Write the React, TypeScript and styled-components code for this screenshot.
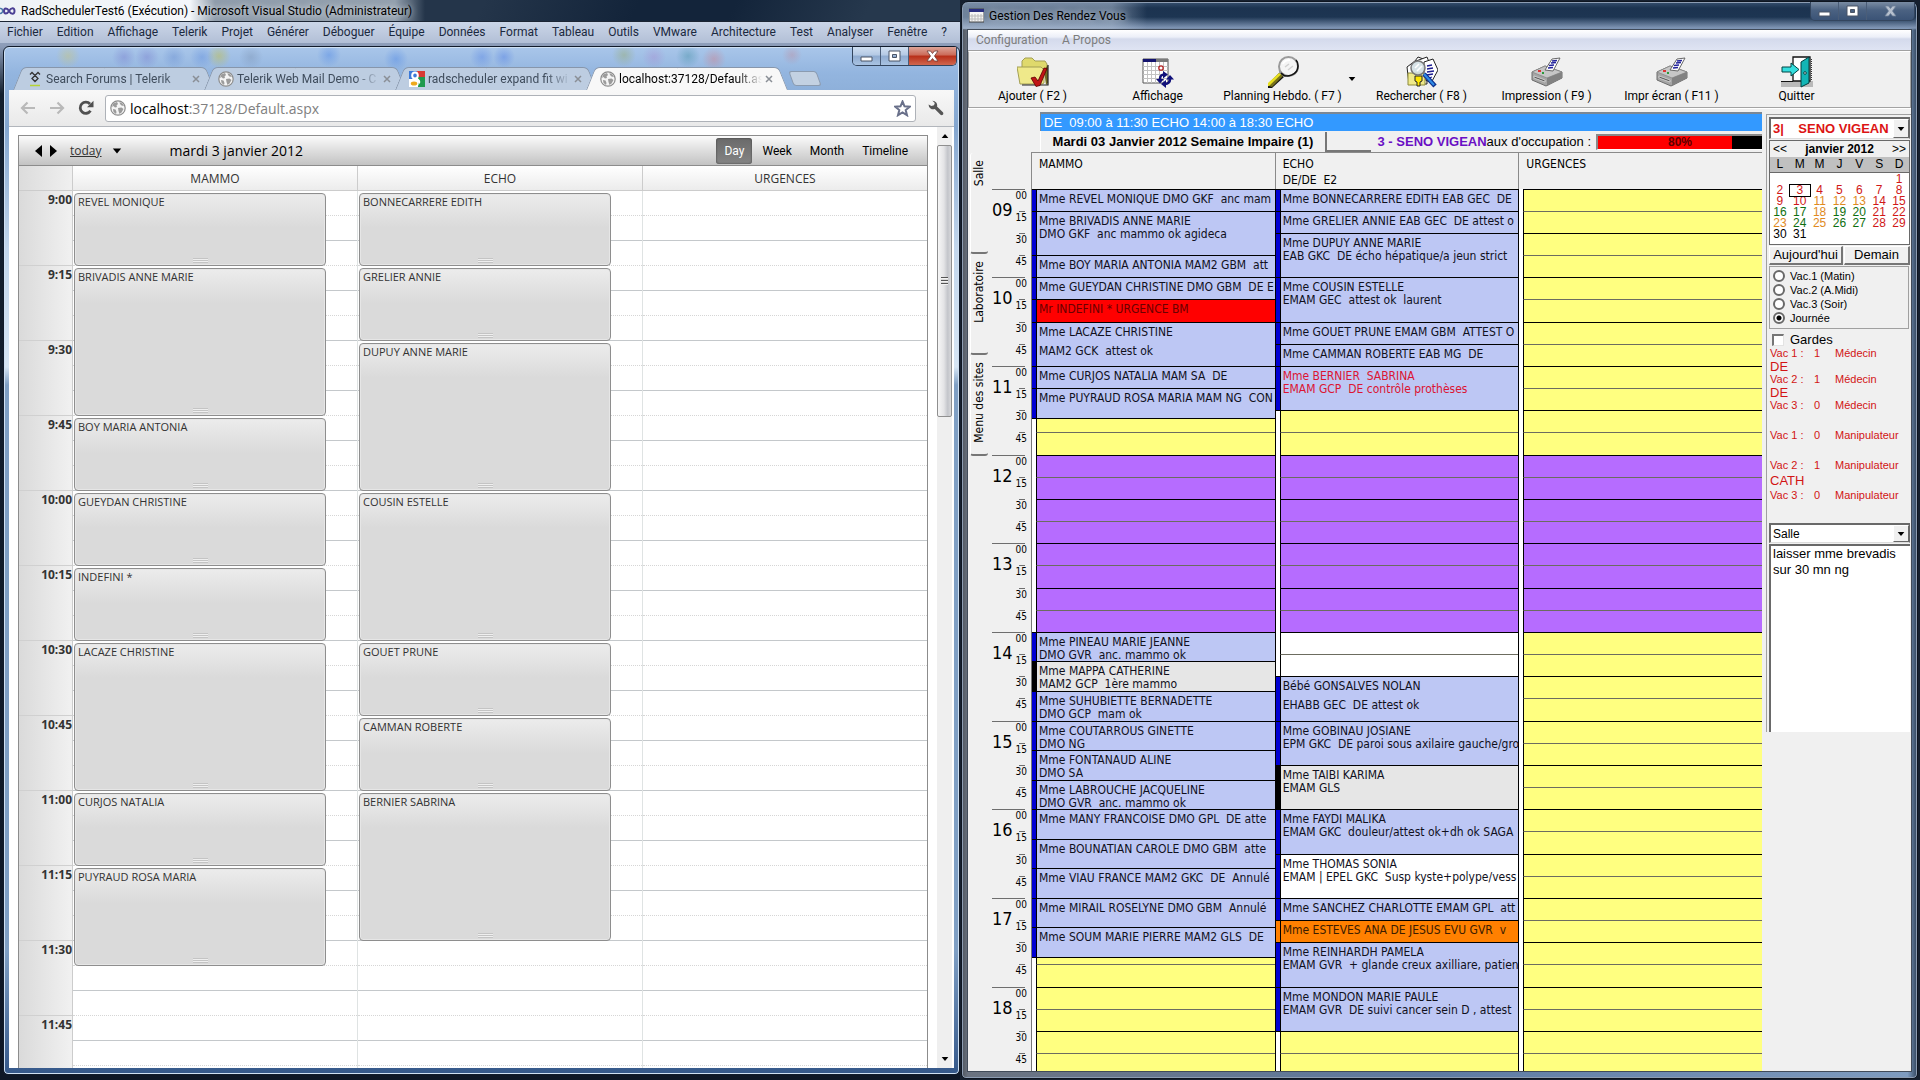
import React from "react";
import styled, { createGlobalStyle, css } from "styled-components";

const ui = `Roboto, "Open Sans", sans-serif`;
const web = `"Open Sans", "Noto Sans", sans-serif`;
const arial = `"Liberation Sans", Arial, sans-serif`;
const tahoma = `"DejaVu Sans Condensed", "DejaVu Sans", sans-serif`;

const GlobalStyle = createGlobalStyle`
  * { box-sizing: border-box; }
  body { margin: 0; font-family: ${ui}; font-size: 12px; color: #000; }
  button, input, select, textarea { font: inherit; color: inherit; margin: 0; }
  button { padding: 0; border: 0; background: none; }
`;

const Desktop = styled.div`
  display: grid;
  grid-template-columns: minmax(0, 1fr) minmax(0, 1fr);
  height: 100vh;
  overflow: hidden;
  background: #16202f;
`;

/* ---------- Visual Studio, behind the browser ---------- */

const Studio = styled.section`
  display: flex;
  flex-direction: column;
  min-height: 0;
  background: linear-gradient(to bottom, #b3bfd6 0, #8c9cb8 46px, #14202f 94px, #0e1726 100%);
`;
const StudioTitle = styled.header`
  display: flex;
  align-items: center;
  gap: 5px;
  height: 22px;
  line-height: 22px;
  border-bottom: 1px solid #1b2534;
  background:
    linear-gradient(to right, #eef2f6 0, #f4f7fa 190px, #8f9cab 215px, #93a0ae 395px, rgba(60, 76, 96, 0) 425px),
    linear-gradient(115deg, #24354a 0, #24354a 50%, #13243a 66%, #13243a 76%, #26384d 90%);
`;
const StudioTitleText = styled.h1`
  margin: 0;
  font-size: 12px;
  font-weight: 400;
  text-shadow: 0 0 6px #fff;
`;
const StudioMenu = styled.nav`
  display: flex;
  gap: 14px;
  height: 21px;
  padding: 0 7px;
  line-height: 21px;
  color: #1b293e;
  background: linear-gradient(to bottom, #cbd6e8, #b2bfd6);
`;
const MenuItem = styled.button`
  flex: none;
`;

/* ---------- Browser window ---------- */

const Browser = styled.section`
  display: flex;
  flex: 1;
  flex-direction: column;
  min-height: 0;
  margin: 3px 0 5px 3px;
  padding: 0 5px 6px 5px;
  border: 1px solid #111b2b;
  border-radius: 6px 6px 5px 5px;
  box-shadow: inset 0 0 0 1px #cfe0f2;
  background:
    radial-gradient(circle at 64px 9px, rgba(200, 196, 120, 0.45), transparent 12px),
    radial-gradient(circle at 120px 10px, rgba(110, 110, 200, 0.35), transparent 12px),
    radial-gradient(circle at 143px 10px, rgba(110, 110, 200, 0.35), transparent 12px),
    radial-gradient(circle at 170px 10px, rgba(80, 120, 200, 0.3), transparent 12px),
    radial-gradient(circle at 198px 10px, rgba(80, 130, 220, 0.35), transparent 12px),
    radial-gradient(circle at 215px 9px, rgba(190, 190, 90, 0.55), transparent 12px),
    radial-gradient(circle at 247px 10px, rgba(110, 130, 160, 0.3), transparent 12px),
    radial-gradient(circle at 325px 8px, rgba(70, 130, 230, 0.4), transparent 12px),
    radial-gradient(circle at 392px 12px, rgba(70, 130, 230, 0.4), transparent 12px),
    radial-gradient(circle at 478px 10px, rgba(70, 120, 230, 0.35), transparent 12px),
    radial-gradient(circle at 500px 10px, rgba(60, 110, 230, 0.35), transparent 11px),
    radial-gradient(circle at 620px 8px, rgba(150, 170, 110, 0.45), transparent 12px),
    radial-gradient(circle at 650px 10px, rgba(170, 120, 200, 0.3), transparent 12px),
    radial-gradient(circle at 684px 9px, rgba(60, 140, 160, 0.4), transparent 12px),
    radial-gradient(circle at 710px 12px, rgba(210, 120, 130, 0.4), transparent 12px),
    radial-gradient(circle at 788px 8px, rgba(200, 120, 130, 0.3), transparent 10px),
    linear-gradient(to bottom, #a9c6ea 0, #93b5df 26px, #84a6cf 80px, #c2d6ec 200px, #d6e5f4 320px, #7f9fc4 338px, #7f9fc4 88%, #35588a 100%);
`;
const BrowserTop = styled.header`
  display: flex;
  justify-content: space-between;
  height: 43px;
`;
const TabList = styled.div`
  display: flex;
  align-items: flex-end;
  padding-left: 4px;
`;
const TabItem = styled.div<{ $active?: boolean }>`
  position: relative;
  z-index: ${(p) => (p.$active ? 1 : 0)};
  display: flex;
  align-items: center;
  gap: 3px;
  width: 201px;
  height: 23px;
  margin-right: -10px;
  padding: 0 14px;
  color: ${(p) => (p.$active ? "#000" : "#3f4c5c")};
  &::before,
  &::after {
    content: "";
    position: absolute;
    z-index: -1;
    top: 0;
    bottom: 0;
    width: 50%;
    border-top: 1px solid #8796ab;
    background: ${(p) => (p.$active ? "#f8f8f8" : "#bdcde1")};
  }
  &::before {
    left: 0;
    border-left: 1px solid #8796ab;
    border-top-left-radius: 5px;
    transform: skewX(-22deg);
    transform-origin: bottom left;
  }
  &::after {
    right: 0;
    border-right: 1px solid #8796ab;
    border-top-right-radius: 5px;
    transform: skewX(22deg);
    transform-origin: bottom right;
  }
`;
const TabLabel = styled.span`
  flex: 1;
  overflow: hidden;
  white-space: nowrap;
  mask-image: linear-gradient(to right, #000 82%, transparent 100%);
`;
const NewTab = styled.button`
  align-self: flex-end;
  width: 28px;
  height: 15px;
  margin: 0 0 4px 14px;
  border: 1px solid #8b9bb0;
  border-radius: 3px;
  background: #c3d1e2;
  transform: skewX(20deg);
`;
const Caption = styled.div`
  display: flex;
  height: 19px;
  margin-right: -3px;
  border: 1px solid #33455e;
  border-top: 0;
  border-radius: 0 0 5px 5px;
  overflow: hidden;
`;
const CaptionButton = styled.button<{ $close?: boolean; $dim?: boolean }>`
  display: flex;
  align-items: center;
  justify-content: center;
  width: ${(p) => (p.$close ? 47 : 28)}px;
  border-right: ${(p) => (p.$close ? "0" : "1px solid #4a5d78")};
  background: ${(p) =>
    p.$dim
      ? "linear-gradient(to bottom, #7a8ca3, #4b6282 45%, #3b5376)"
      : p.$close
      ? "linear-gradient(to bottom, #dda498, #cb6a58 45%, #b82e18 50%, #d0674f)"
      : "linear-gradient(to bottom, #d0dff1, #b4c9e4 45%, #8fabd0 50%, #a9c3e2)"};
`;
const BrowserBar = styled.div`
  display: flex;
  align-items: center;
  gap: 10px;
  height: 37px;
  padding: 0 9px;
  border-bottom: 1px solid #b2b6bc;
  background: linear-gradient(to bottom, #f8f8f8, #e9e9e9);
`;
const BarButton = styled.button`
  display: flex;
  width: 19px;
  justify-content: center;
`;
const Omnibox = styled.div`
  display: flex;
  flex: 1;
  align-items: center;
  gap: 4px;
  height: 27px;
  padding: 0 4px;
  border: 1px solid #aeb2b8;
  border-radius: 3px;
  background: #fff;
`;
const Url = styled.span`
  flex: 1;
  font-family: ${web};
  font-size: 14px;
  color: #808080;
`;
const UrlHost = styled.span`
  color: #000;
`;
const Viewport = styled.div`
  display: flex;
  flex: 1;
  min-height: 0;
  background: #fff;
`;

/* ---------- Telerik scheduler ---------- */

const Scheduler = styled.main`
  display: flex;
  flex: 1;
  flex-direction: column;
  min-width: 0;
  margin: 8px 9px 0 9px;
  border: 1px solid #8c8c8c;
  border-bottom: 0;
  overflow: hidden;
  color: #333;
  font-family: ${web};
`;
const SchedulerBar = styled.header`
  display: flex;
  flex: none;
  align-items: center;
  height: 30px;
  padding: 0 11px 0 13px;
  border-bottom: 1px solid #8c8c8c;
  background: linear-gradient(to bottom, #fbfbfb, #dedede 50%, #c3c3c3);
  color: #000;
`;
const StepButton = styled.button`
  display: flex;
  width: 14px;
  justify-content: center;
`;
const TodayLink = styled.a`
  margin: 0 10px 0 10px;
  color: #333;
`;
const DayTitle = styled.h2`
  margin: 0 auto 0 48px;
  font-size: 14px;
  font-weight: 400;
`;
const ViewTabs = styled.div`
  display: flex;
  gap: 2px;
  font-family: ${ui};
`;
const ViewTab = styled.button<{ $active?: boolean }>`
  height: 26px;
  padding: 0 8px;
  border-radius: 3px;
  ${(p) =>
    p.$active &&
    css`
      color: #fff;
      background: linear-gradient(to bottom, #6a6a6a, #848484);
      box-shadow: inset 0 0 2px #333;
    `}
`;
const SchedulerHeads = styled.div`
  display: flex;
  flex: none;
  height: 25px;
  padding-left: 54px;
  line-height: 25px;
  border-bottom: 1px solid #ccc;
  background: linear-gradient(to right, #dcdcdc, #f0f0f0 54px, transparent 54px), linear-gradient(to bottom, #fff, #ececec);
`;
const SchedulerHead = styled.div`
  flex: 1;
  border-left: 1px solid #ccc;
  text-align: center;
  &:first-child { margin-left: -1px; }
`;
const SchedulerBody = styled.div`
  display: flex;
  flex: 1;
  min-height: 0;
  overflow: hidden;
`;
const TimeColumn = styled.div`
  flex: none;
  width: 54px;
  border-right: 1px solid #ccc;
  background: linear-gradient(to right, #dadada, #f1f1f1);
`;
const TimeLabel = styled.div`
  height: 75px;
  padding-top: 1px;
  border-bottom: 1px solid #d0d0d0;
  font-weight: 700;
  line-height: 16px;
  text-align: right;
`;
const DayColumn = styled.div`
  display: grid;
  flex: 1;
  grid-template-columns: minmax(0, 1fr);
  grid-template-rows: repeat(36, 25px);
  min-width: 0;
  & + & { border-left: 1px solid #dfe3e3; }
`;
const Line = styled.div<{ $row: number }>`
  grid-column: 1;
  grid-row: ${(p) => p.$row};
  border-bottom: 1px ${(p) => (p.$row % 2 ? "dotted #d6d6d6" : "solid #c4c8cb")};
`;
const Appointment = styled.article<{ $start: number; $span: number }>`
  display: flex;
  flex-direction: column;
  justify-content: space-between;
  grid-column: 1;
  grid-row: ${(p) => p.$start + 1} / span ${(p) => p.$span};
  margin: 2px 31px 0 1px;
  padding: 0 3px 2px 3px;
  border: 1px solid #8e8e8e;
  border-radius: 4px;
  background: linear-gradient(to bottom, #ececec 0, #dadada 34px);
  box-shadow: inset 0 0 0 1px #e6e6e6;
  font-size: 11px;
  line-height: 15px;
`;
const Grip = styled.i`
  align-self: center;
  width: 15px;
  height: 5px;
  background: repeating-linear-gradient(to bottom, #c4c4c4 0, #c4c4c4 1px, #efefef 1px, #efefef 2px);
`;
const Scrollbar = styled.div`
  display: flex;
  flex: none;
  flex-direction: column;
  align-items: center;
  width: 15px;
  margin-right: 2px;
  background: #efefef;
`;
const ScrollArrow = styled.button`
  display: flex;
  align-items: center;
  justify-content: center;
  width: 15px;
  height: 18px;
`;
const ScrollTrack = styled.div`
  flex: 1;
  width: 15px;
`;
const ScrollThumb = styled.div`
  display: flex;
  align-items: center;
  justify-content: center;
  height: 30%;
  border: 1px solid #8f8f8f;
  border-radius: 2px;
  background: linear-gradient(to right, #f6f6f6, #e4e4e6 45%, #c3c5ca 75%, #d8d8db);
`;
const ThumbGrip = styled.i`
  width: 7px;
  height: 8px;
  background: repeating-linear-gradient(to bottom, #555 0, #555 1px, #fff 1px, #ccc 3px);
`;

/* ---------- Gestion Des Rendez Vous window ---------- */

const Agenda = styled.section`
  display: flex;
  flex-direction: column;
  min-height: 0;
  margin: 1px 2px 1px 1px;
  padding: 0 5px 6px 5px;
  border: 1px solid #0e1520;
  border-radius: 7px 7px 5px 5px;
  box-shadow: inset 0 0 0 1px #8d9db3;
  background:
    linear-gradient(to right, rgba(180, 195, 215, 0.55) 0, rgba(180, 195, 215, 0.5) 150px, transparent 185px) top / 100% 27px no-repeat,
    linear-gradient(to bottom, #37506f 0, #1c3350 6px, #1d3552 15px, #8096b5 26px, transparent 28px),
    linear-gradient(to right, #50565f 0, #6b7380 6px, #5e7ba2 50%, #7f9cc0 99%, #33475f 100%);
`;
const AgendaTitle = styled.header`
  display: flex;
  align-items: flex-start;
  justify-content: space-between;
  height: 27px;
`;
const AgendaName = styled.h1`
  display: flex;
  align-items: center;
  gap: 5px;
  height: 27px;
  margin: 0;
  padding-left: 2px;
  font-size: 12px;
  font-weight: 400;
  text-shadow: 0 0 6px #cfd9e6;
`;
const Client = styled.div`
  display: flex;
  flex: 1;
  flex-direction: column;
  min-height: 0;
  border: 1px solid #414b59;
  background: #f0f0f0;
`;
const AgendaMenu = styled.nav`
  display: flex;
  flex: none;
  gap: 14px;
  height: 21px;
  padding: 0 8px;
  line-height: 20px;
  color: #7d7d7d;
  background: linear-gradient(to bottom, #fff 0, #eceff8 35%, #d4daec 45%, #dfe4f3);
  border-bottom: 1px solid #a0a0a0;
`;
const ToolRow = styled.div`
  display: flex;
  flex: none;
  height: 57px;
  padding: 4px 1px 0 1px;
  border: 1px solid #a3a3a3;
  border-top-color: #fff;
  box-shadow: 0 1px 0 #fff;
`;
const Tool = styled.button`
  display: flex;
  flex-direction: column;
  align-items: center;
  justify-content: flex-start;
  width: 125px;
  line-height: 16px;
`;
const ToolArrow = styled.button`
  width: 14px;
  padding-bottom: 6px;
`;
const Workspace = styled.div`
  display: flex;
  flex: 1;
  min-height: 0;
`;
const SiteTabs = styled.div`
  display: flex;
  flex: none;
  flex-direction: column;
  width: 20px;
  padding: 45px 0 0 2px;
`;
const SiteTab = styled.button`
  height: 101px;
  padding: 7px 0;
  border-left: 1px solid #fff;
  border-bottom: 2px solid #767676;
  border-radius: 3px;
  font-family: ${tahoma};
  line-height: 17px;
  text-align: right;
  writing-mode: sideways-lr;
`;
const Planner = styled.main`
  display: flex;
  flex: 1;
  flex-direction: column;
  min-width: 0;
  padding-top: 4px;
`;
const DutyLine = styled.div`
  flex: none;
  height: 19px;
  margin-left: 52px;
  padding-left: 3px;
  border-top: 2px solid #7b8794;
  border-left: 1px solid #7b8794;
  background: #3399ff;
  color: #fff;
  font-family: ${arial};
  font-size: 13px;
  line-height: 17px;
  white-space: pre;
`;
const InfoLine = styled.div`
  display: flex;
  flex: none;
  align-items: center;
  height: 21px;
  margin-left: 52px;
  border-left: 1px solid #fff;
  font-family: ${arial};
  font-size: 13px;
`;
const DateLabel = styled.strong`
  width: 284px;
  text-align: center;
  white-space: nowrap;
`;
const InfoBox = styled.div`
  width: 46px;
  height: 20px;
  border-left: 2px solid #767676;
  border-bottom: 2px solid #767676;
`;
const SectorLabel = styled.strong`
  margin-left: auto;
  color: #6a0fc4;
  white-space: nowrap;
`;
const RateLabel = styled.span`
  margin-right: 5px;
  white-space: nowrap;
`;
const Gauge = styled.div`
  display: grid;
  width: 166px;
  height: 16px;
  border: 2px solid #8a8a8a;
  border-right: 0;
  border-bottom: 1px solid #fff;
  background: #000;
`;
const GaugeFill = styled.div`
  grid-area: 1 / 1;
  background: #f00;
`;
const GaugeText = styled.span`
  grid-area: 1 / 1;
  color: #5a0000;
  font-weight: 700;
  font-size: 12px;
  line-height: 13px;
  text-align: center;
`;
const PlannerHeads = styled.div`
  display: flex;
  flex: none;
  height: 37px;
  padding-left: 43px;
`;
const PlannerHead = styled.div`
  flex: 1;
  padding: 3px 7px 0 7px;
  border-top: 1px solid #8a8a8a;
  border-left: 1px solid #8a8a8a;
  font-family: ${tahoma};
  line-height: 16px;
  white-space: pre;
`;

/* One row per five minutes; three hours take 266px. */
const STEPS = 120;
const edge = (k: number) => Math.floor((k * 5 * 266) / 180);
const rowTemplate = Array.from({ length: STEPS }, (_, k) => `${edge(k + 1) - edge(k)}px`).join(" ");

const PlannerBody = styled.div`
  display: flex;
  flex: 1;
  min-height: 0;
  overflow: hidden;
`;
const Ruler = styled.div`
  display: grid;
  flex: none;
  grid-template-columns: 21px 14px;
  grid-template-rows: ${rowTemplate};
  width: 43px;
  padding-left: 4px;
  font-family: ${tahoma};
`;
const HourMark = styled.div<{ $hour: number }>`
  grid-column: 1;
  grid-row: ${(p) => p.$hour * 12 + 1} / span 12;
  padding-top: 7px;
  border-top: 1px solid #6e6e6e;
  font-size: 18px;
  line-height: 26px;
`;
const QuarterMark = styled.div<{ $quarter: number }>`
  display: flex;
  flex-direction: column;
  align-items: flex-end;
  grid-column: 2;
  grid-row: ${(p) => p.$quarter * 3 + 1} / span 3;
  font-size: 10px;
  line-height: 11px;
  &::before {
    content: "";
    width: ${(p) => (p.$quarter % 4 ? 6 : 12)}px;
    height: 1px;
    margin-right: 2px;
    background: #6e6e6e;
  }
`;
const Room = styled.div`
  display: grid;
  flex: 1;
  grid-template-columns: 4px minmax(0, 1fr);
  grid-template-rows: ${rowTemplate};
  min-width: 0;
  border-left: 1px solid #000;
  background: #fff;
  &:nth-child(2) { border-left-color: #777; }
`;
const Slot = styled.div<{ $quarter: number; $fill: string }>`
  grid-column: 2;
  grid-row: ${(p) => p.$quarter * 3 + 1} / span 3;
  border-left: 1px solid #000;
  border-top: 1px solid ${(p) => (p.$quarter % 2 ? "#6c6c60" : "#000")};
  background: ${(p) => p.$fill};
`;
const Visit = styled.article<{ $from: number; $to: number; $fill: string; $bar: string; $ink: string; $spaced: boolean }>`
  display: flex;
  flex-direction: column;
  gap: ${(p) => (p.$spaced ? 6 : 0)}px;
  grid-column: 1 / 3;
  grid-row: ${(p) => p.$from / 5 + 1} / ${(p) => p.$to / 5 + 1};
  padding: 3px 0 0 7px;
  border-top: 1px solid #000;
  box-shadow: 0 1px 0 #000;
  background: linear-gradient(to right, ${(p) => p.$bar} 4px, #000 4px, #000 5px, ${(p) => p.$fill} 5px);
  color: ${(p) => p.$ink};
  font-family: ${tahoma};
  line-height: 13px;
  white-space: pre;
  overflow: hidden;
`;

/* ---------- Side panel ---------- */

const Side = styled.aside`
  flex: none;
  align-self: flex-start;
  width: 145px;
  margin: 6px 0 0 4px;
  padding: 2px 1px 0 2px;
  border-top: 1px solid #a0a0a0;
  border-left: 1px solid #a0a0a0;
  font-family: ${arial};
`;
const SelectBox = styled.div<{ $large?: boolean }>`
  display: grid;
  height: ${(p) => (p.$large ? 22 : 20)}px;
  border: 2px solid #696969;
  border-right: 1px solid #696969;
  border-bottom: 1px solid #dcdcdc;
  background: #fff;
`;
const Select = styled.select<{ $large?: boolean }>`
  grid-area: 1 / 1;
  min-width: 0;
  padding: 0 0 0 2px;
  border: 0;
  appearance: none;
  background: #fff;
  ${(p) =>
    p.$large &&
    css`
      color: #dc1414;
      font-size: 13px;
      font-weight: 700;
    `}
`;
const SelectArrow = styled.span`
  display: flex;
  align-items: center;
  justify-content: center;
  grid-area: 1 / 1;
  justify-self: end;
  width: 16px;
  border: 1px solid #fff;
  border-right-color: #696969;
  border-bottom-color: #696969;
  background: #f0f0f0;
  pointer-events: none;
`;
const Calendar = styled.section`
  margin-top: 1px;
  border: 1px solid #696969;
  background: #fff;
`;
const CalendarHead = styled.header`
  display: flex;
  align-items: center;
  justify-content: space-between;
  height: 16px;
  padding: 0 3px;
  background: #f0f0f0;
`;
const MonthTable = styled.table`
  width: 100%;
  border-collapse: collapse;
  table-layout: fixed;
  text-align: center;
  line-height: 11px;
  th {
    height: 15px;
    padding: 0;
    background: #c0c0c0;
    border-bottom: 1px solid #696969;
    font-size: 12px;
    font-weight: 400;
  }
  td { height: 11px; padding: 0; }
  tbody::before {
    content: "";
    display: table-row;
    height: 2px;
  }
`;
const MonthFoot = styled.div`
  height: 4px;
`;
const DayCell = styled.td<{ $ink: string; $current: boolean }>`
  color: ${(p) => p.$ink};
  outline: ${(p) => (p.$current ? "1px solid #000" : "none")};
`;
const DayButtons = styled.div`
  display: grid;
  grid-template-columns: 74px 1fr;
  gap: 1px;
  margin-top: 1px;
`;
const PushButton = styled.button`
  height: 19px;
  border: 1px solid #fff;
  border-right: 2px solid #767676;
  border-bottom: 2px solid #767676;
  background: #f0f0f0;
  font-size: 13px;
  line-height: 16px;
`;
const Periods = styled.fieldset`
  margin: 1px 1px 0 0;
  padding: 2px 2px 3px 3px;
  border: 1px solid #a0a0a0;
  font-size: 11px;
`;
const Choice = styled.label`
  display: flex;
  align-items: center;
  gap: 5px;
  height: 14px;
`;
const Radio = styled.input`
  flex: none;
  width: 12px;
  height: 12px;
  appearance: none;
  border: 2px solid #696969;
  border-radius: 50%;
  background: #fff;
  &:checked { background: radial-gradient(circle, #000 2px, #fff 3px); }
`;
const Check = styled.input`
  width: 12px;
  height: 12px;
  appearance: none;
  border: 2px solid #767676;
  border-right: 1px solid #e3e3e3;
  border-bottom: 1px solid #e3e3e3;
  background: #fff;
`;
const Guards = styled.label`
  display: flex;
  align-items: center;
  gap: 6px;
  height: 18px;
  padding: 3px 0 0 3px;
  font-size: 13px;
`;
const StaffList = styled.ul<{ $step: number }>`
  display: grid;
  grid-auto-rows: ${(p) => p.$step}px;
  margin: 0;
  padding: 0;
  list-style: none;
  color: #d21414;
`;
const StaffItem = styled.li`
  display: grid;
  grid-template-columns: 44px 21px 1fr;
  grid-template-rows: 13px 1fr;
  align-items: center;
  padding-left: 1px;
  font-size: 11px;
  line-height: 13px;
`;
const StaffName = styled.span`
  grid-column: 1 / 4;
  font-size: 13px;
`;
const StaffGap = styled.div`
  height: 4px;
`;
const Note = styled.textarea`
  display: block;
  width: 100%;
  height: 188px;
  margin-top: 1px;
  padding: 0 2px;
  border: 0;
  border-top: 2px solid #696969;
  border-left: 2px solid #696969;
  border-radius: 0;
  resize: none;
  background: #fff;
  font-size: 13px;
  line-height: 16px;
`;

/* ---------- Icons ---------- */

const Triangle = ({ dir, size = 8 }: { dir: "left" | "right" | "up" | "down"; size?: number }) => {
  const d = { left: "M9 0v12L2 6z", right: "M3 0v12l7-6z", up: "M1 9h10L6 3z", down: "M1 3h10L6 9z" }[dir];
  return (
    <svg width={size} height={size} viewBox="0 0 12 12" aria-hidden="true">
      <path d={d} fill="#000" />
    </svg>
  );
};
const GlobeIcon = () => (
  <svg width="16" height="16" viewBox="0 0 16 16" aria-hidden="true">
    <circle cx="8" cy="8" r="7.2" fill="#f4f4f4" stroke="#8c8c8c" strokeWidth="1.2" />
    <path d="M3 3.5 7 2l1 2-1.500 1.500L7 7 5 7.500 3.500 6 2 7zM9.500 2l3 1.500L14 6l-2.500-.5L10 4zM8 8l3.500-.5L13.500 9l-2 3.500L9.500 14l-1-3zM3 9l2.500.5L6.500 12 6 14l-2.500-2z" fill="#9b9b9b" />
  </svg>
);
const TelerikIcon = () => (
  <svg width="16" height="16" viewBox="0 0 16 16" fill="none" aria-hidden="true">
    <path d="M3 3.500 5 1.500l6 6-3 3-3-3 6-6 2 2" stroke="#333" strokeWidth="1.300" />
    <path d="M3 14.500h10" stroke="#b6d334" strokeWidth="1.500" />
  </svg>
);
const GoogleIcon = () => (
  <svg width="16" height="16" viewBox="0 0 16 16" aria-hidden="true">
    <path d="M0 0h16v16H0z" fill="#fff" />
    <path d="M8 0h8v6H9z" fill="#d93a35" />
    <path d="M9 6h7v10H9z" fill="#1f9a4e" />
    <path d="M0 0h8v8H0z" fill="#3b79d8" />
    <ellipse cx="6" cy="4.500" rx="2.800" ry="3" fill="#3b79d8" stroke="#fff" strokeWidth="2" />
    <path d="M6.500 8c4 1 4 3 3 4" fill="none" stroke="#fff" strokeWidth="2.500" />
    <ellipse cx="5" cy="12.500" rx="4" ry="2.800" fill="#eda91f" stroke="#fff" strokeWidth="1.500" />
  </svg>
);
const CloseTabIcon = () => (
  <svg width="8" height="8" viewBox="0 0 8 8" aria-hidden="true">
    <path d="m1 1 6 6m0-6L1 7" stroke="#8a8f96" strokeWidth="1.500" />
  </svg>
);
const MinIcon = () => (
  <svg width="13" height="12" viewBox="0 0 13 12" aria-hidden="true">
    <path d="M1 7h11v4H1z" fill="#fff" stroke="#4b5566" />
  </svg>
);
const MaxIcon = () => (
  <svg width="13" height="12" viewBox="0 0 13 12" aria-hidden="true">
    <path d="M1 1h11v10H1zM4.500 4.500v3h4v-3z" fill="#fff" fillRule="evenodd" stroke="#4b5566" />
  </svg>
);
const CrossIcon = ({ dim }: { dim?: boolean }) => (
  <svg width="13" height="12" viewBox="0 0 13 12" aria-hidden="true">
    <path d="M1 1h3.500l2 2.500L8.500 1H12L8.500 6l3.500 5H8.500l-2-2.500-2 2.500H1l3.500-5z" fill={dim ? "#b6c0ce" : "#fff"} stroke={dim ? "#6f8099" : "#6b3c38"} strokeWidth=".8" />
  </svg>
);
const ArrowIcon = ({ flip }: { flip?: boolean }) => (
  <svg width="16" height="14" viewBox="0 0 16 14" fill="none" aria-hidden="true">
    <path d={flip ? "M1 7h13M8.500 1.500 14 7l-5.500 5.500" : "M15 7H2m5.500-5.500L2 7l5.500 5.500"} stroke="#b9b9b9" strokeWidth="2.200" />
  </svg>
);
const ReloadIcon = () => (
  <svg width="16" height="16" viewBox="0 0 16 16" aria-hidden="true">
    <path d="M12.500 10.800A5.600 5.600 0 1 1 12 4" fill="none" stroke="#505050" strokeWidth="2.800" />
    <path d="M15.500.8v6.400H9z" fill="#505050" />
  </svg>
);
const StarIcon = () => (
  <svg width="17" height="17" viewBox="0 0 17 17" aria-hidden="true">
    <path d="m8.500 1.500 2 4.800 5.200.4-4 3.400 1.300 5.100-4.500-2.800-4.500 2.800 1.300-5.100-4-3.400 5.200-.4z" fill="#fff" stroke="#69708a" strokeWidth="2" />
  </svg>
);
const WrenchIcon = () => (
  <svg width="16" height="16" viewBox="0 0 16 16" aria-hidden="true">
    <path d="M.6 4.600A4.600 4.600 0 0 0 6.800 9l5.700 5.800c1.800 1.200 3.700-.9 2.400-2.500L9 6.600A4.600 4.600 0 0 0 4.400.8L6.800 3 6 5.300l-2.600.6z" fill="#555" />
  </svg>
);
const StudioIcon = () => (
  <svg width="16" height="10" viewBox="0 0 16 10" fill="none" aria-hidden="true">
    <path d="M0 2.500c3-1 4 5 0 5" stroke="#4a78a8" strokeWidth="1.500" />
    <path d="M9 5C7 1.500 4 2 4 5s3 3.500 5 0 5.500-4 5.500 0S11 8.500 9 5z" stroke="#4b3f94" strokeWidth="2" />
  </svg>
);
const AgendaIcon = () => (
  <svg width="15" height="15" viewBox="0 0 15 15" aria-hidden="true">
    <path d="M0 1h15v13H0z" fill="#f5f5f5" stroke="#444" />
    <path d="M0 1h15v3H0z" fill="#2a2f80" />
    <path d="M3 6v7M6 6v7M9 6v7M12 6v7M1 8h13M1 11h13" stroke="#bbb" />
  </svg>
);
const FolderIcon = () => (
  <svg width="32" height="32" viewBox="0 0 32 32" aria-hidden="true">
    <path d="M5 12V5l3-3h7l3 3h10l2 3v5z" fill="#dfd96c" stroke="#a39f52" />
    <path d="M0 11h24l3 3v13l-2 1H3z" fill="#efe98a" stroke="#a39f52" />
    <path d="M27 14l4-5v18l-2 2z" fill="#6f6c22" />
    <path d="M5 29h26V9" fill="none" stroke="#222" strokeWidth="1.200" />
    <path d="m14 22 4-1 3 4 6-13 3 .5-7 17-4 1z" fill="#c01515" stroke="#5a0000" strokeWidth=".8" />
  </svg>
);
const SheetIcon = () => (
  <svg width="32" height="32" viewBox="0 0 32 32" aria-hidden="true">
    <path d="M1 3h25v24H1z" fill="#fff" stroke="#555" />
    <path d="M1 3h25v3H1z" fill="#7a7a7a" />
    <path d="M1 3h13v3H1z" fill="#14146e" />
    <path d="M5.500 6v21M9.500 6v21M13.500 6v21M17.500 6v21M21.500 6v21M1 10.500h25M1 14.500h25M1 18.500h25M1 22.500h25" stroke="#c2c2c2" />
    <circle cx="19" cy="12" r="2.200" fill="#fff" stroke="#b32222" strokeWidth="1.300" />
    <path d="M18 23c0-3 2-4.500 4-4.500M28 23c0 3-2 5-5 5" fill="none" stroke="#10107a" strokeWidth="2.600" />
    <path d="m21 15 5 3.500-5 4zM24 32l-5-4 5-4zM24 23.500h8L28 19zM14 23h8l-4 4.500z" fill="#10107a" />
  </svg>
);
const LensIcon = () => (
  <svg width="32" height="32" viewBox="0 0 32 32" aria-hidden="true">
    <path d="m1 28 11-11 5 4L5 32H1z" fill="#111" />
    <path d="m1 27 11-10 3 2L4 30H1z" fill="#e8e020" />
    <path d="m2 30 12-11.500 2 1.500L5 31z" fill="#77721a" />
    <path d="m12 16 3-3 6 5-3 3z" fill="#333" />
    <circle cx="21.500" cy="10.500" r="9.500" fill="#f4f4f4" stroke="#9a9a9a" strokeWidth="2" />
    <path d="M14 17c5 6 17 2 17-7 0-3-1-5-2-6" fill="none" stroke="#111" strokeWidth="1.600" />
    <path d="M16 8c1-3 4-4 7-4" fill="none" stroke="#fff" strokeWidth="2" />
    <path d="m18 11 4-3m-1 6 5-4" stroke="#d0d0d0" strokeWidth="1.500" />
  </svg>
);
const ResearchIcon = () => (
  <svg width="32" height="32" viewBox="0 0 32 32" aria-hidden="true">
    <path d="M1 11 9 5l3-4 8 3 1 24H3z" fill="#fff" stroke="#222" />
    <path d="M10 5 21 1l2 5" fill="#fff" stroke="#222" />
    <path d="m18 6 9-3 5 11-7 13-7-4z" fill="#fff" stroke="#222" />
    <path d="m21 10 5-1m-5 4 6-1m-6 4 7-1m-7 4 6-1m-4 4 3-1" stroke="#1c1c90" strokeWidth="1.300" />
    <path d="M2 17h15l2 3v9H2z" fill="#efe98a" stroke="#8c8a3a" />
    <path d="M9 20h7v5l-2 1v4h-3v-4l-2-1z" fill="#ffe600" stroke="#222" />
    <circle cx="12" cy="12" r="7" fill="#cfdde2" fillOpacity=".85" stroke="#777" strokeWidth="1.500" />
    <path d="m9 12 4-4m-2 7 5-5" stroke="#fff" strokeWidth="1.500" />
    <path d="m18 18 11 12" stroke="#0c2f8c" strokeWidth="4.500" />
    <path d="m18 18 10 11" stroke="#2f8ae6" strokeWidth="2.200" />
  </svg>
);
const PrinterIcon = () => (
  <svg width="32" height="32" viewBox="0 0 32 32" aria-hidden="true">
    <path d="m1 16 13-6 17 6v6L15 30 1 24z" fill="#a5a5a5" stroke="#6c6c6c" />
    <path d="m1 16 13-6 17 6-15 6z" fill="#c6c6c6" stroke="#888" strokeWidth=".8" />
    <path d="M16 22v8l15-8v-6z" fill="#828282" />
    <path d="m3 20 11 4v2L3 22z" fill="#555" stroke="#ddd" strokeWidth=".8" />
    <path d="m14 14 7-11 8-1-7 13z" fill="#fff" stroke="#666" />
    <path d="m21 5 5-.5m-6 2.500 5-.5m-7 3 5-.5m-6 3 5-.5" stroke="#22229a" strokeWidth="1.300" />
    <path d="M7 15h3" stroke="#d33" strokeWidth="2" />
    <path d="M11 17h2" stroke="#2b9a3a" strokeWidth="2" />
  </svg>
);
const ExitIcon = () => (
  <svg width="32" height="32" viewBox="0 0 32 32" aria-hidden="true">
    <path d="M0 25h32v6H0z" fill="#b9b9b9" />
    <path d="M0 25.500h12" stroke="#111" />
    <path d="M12 1h17v24H12z" fill="#fff" stroke="#111" strokeWidth="1.300" />
    <path d="M30.500 3v22" stroke="#333" strokeDasharray="1 1" />
    <path d="m20 6 8-5v26l-8 4z" fill="#12b5b5" stroke="#023f3f" />
    <circle cx="24" cy="17" r="1.300" fill="#fff" stroke="#023f3f" />
    <path d="M1 11h9V7l8 6.500-8 6.500v-4H1z" fill="#35dede" stroke="#044" />
  </svg>
);

/* ---------- Data ---------- */

const studioMenu = ["Fichier", "Edition", "Affichage", "Telerik", "Projet", "Générer", "Déboguer", "Équipe", "Données", "Format", "Tableau", "Outils", "VMware", "Architecture", "Test", "Analyser", "Fenêtre", "?"];

const browserTabs = [
  { icon: <TelerikIcon />, label: "Search Forums | Telerik" },
  { icon: <GlobeIcon />, label: "Telerik Web Mail Demo - C" },
  { icon: <GoogleIcon />, label: "radscheduler expand fit wi" },
  { icon: <GlobeIcon />, label: "localhost:37128/Default.as", active: true },
];

const hoursLeft = ["9:00", "9:15", "9:30", "9:45", "10:00", "10:15", "10:30", "10:45", "11:00", "11:15", "11:30", "11:45"];

const dayColumns: { name: string; items: [number, number, string][] }[] = [
  {
    name: "MAMMO",
    items: [
      [0, 3, "REVEL MONIQUE"],
      [3, 6, "BRIVADIS ANNE MARIE"],
      [9, 3, "BOY MARIA ANTONIA"],
      [12, 3, "GUEYDAN CHRISTINE"],
      [15, 3, "INDEFINI *"],
      [18, 6, "LACAZE CHRISTINE"],
      [24, 3, "CURJOS NATALIA"],
      [27, 4, "PUYRAUD ROSA MARIA"],
    ],
  },
  {
    name: "ECHO",
    items: [
      [0, 3, "BONNECARRERE EDITH"],
      [3, 3, "GRELIER ANNIE"],
      [6, 6, "DUPUY ANNE MARIE"],
      [12, 6, "COUSIN ESTELLE"],
      [18, 3, "GOUET PRUNE"],
      [21, 3, "CAMMAN ROBERTE"],
      [24, 6, "BERNIER SABRINA"],
    ],
  },
  { name: "URGENCES", items: [] },
];

type VisitKind = "booked" | "urgent" | "waiting" | "open" | "absent" | "flagged";
const looks: Record<VisitKind, { fill: string; bar: string; ink: string }> = {
  booked: { fill: "#bdc7f4", bar: "#0000d2", ink: "#10101c" },
  urgent: { fill: "#ff0000", bar: "#0000d2", ink: "#6a0000" },
  waiting: { fill: "#e6e6e6", bar: "#000000", ink: "#10101c" },
  open: { fill: "#ffffff", bar: "#0000d2", ink: "#10101c" },
  absent: { fill: "#ff8000", bar: "#ff8000", ink: "#3c1c00" },
  flagged: { fill: "#bdc7f4", bar: "#0000d2", ink: "#dc1432" },
};
type VisitData = { from: number; to: number; lines: string[]; kind?: VisitKind; spaced?: boolean };

const rooms: { name: string; open: number[]; visits: VisitData[] }[] = [
  {
    name: "MAMMO",
    open: [],
    visits: [
      { from: 0, to: 15, lines: ["Mme REVEL MONIQUE DMO GKF  anc mam"] },
      { from: 15, to: 45, lines: ["Mme BRIVADIS ANNE MARIE", "DMO GKF  anc mammo ok agideca"] },
      { from: 45, to: 60, lines: ["Mme BOY MARIA ANTONIA MAM2 GBM  att"] },
      { from: 60, to: 75, lines: ["Mme GUEYDAN CHRISTINE DMO GBM  DE E"] },
      { from: 75, to: 90, lines: ["Mr INDEFINI * URGENCE BM"], kind: "urgent" },
      { from: 90, to: 120, lines: ["Mme LACAZE CHRISTINE", "MAM2 GCK  attest ok"], spaced: true },
      { from: 120, to: 135, lines: ["Mme CURJOS NATALIA MAM SA  DE"] },
      { from: 135, to: 155, lines: ["Mme PUYRAUD ROSA MARIA MAM NG  CON"] },
      { from: 300, to: 320, lines: ["Mme PINEAU MARIE JEANNE", "DMO GVR  anc. mammo ok"] },
      { from: 320, to: 340, lines: ["Mme MAPPA CATHERINE", "MAM2 GCP  1ère mammo"], kind: "waiting" },
      { from: 340, to: 360, lines: ["Mme SUHUBIETTE BERNADETTE", "DMO GCP  mam ok"] },
      { from: 360, to: 380, lines: ["Mme COUTARROUS GINETTE", "DMO NG"] },
      { from: 380, to: 400, lines: ["Mme FONTANAUD ALINE", "DMO SA"] },
      { from: 400, to: 420, lines: ["Mme LABROUCHE JACQUELINE", "DMO GVR  anc. mammo ok"] },
      { from: 420, to: 440, lines: ["Mme MANY FRANCOISE DMO GPL  DE atte"] },
      { from: 440, to: 460, lines: ["Mme BOUNATIAN CAROLE DMO GBM  atte"] },
      { from: 460, to: 480, lines: ["Mme VIAU FRANCE MAM2 GKC  DE  Annulé"] },
      { from: 480, to: 500, lines: ["Mme MIRAIL ROSELYNE DMO GBM  Annulé"] },
      { from: 500, to: 520, lines: ["Mme SOUM MARIE PIERRE MAM2 GLS  DE"] },
    ],
  },
  {
    name: "ECHO\nDE/DE  E2",
    open: [20, 21],
    visits: [
      { from: 0, to: 15, lines: ["Mme BONNECARRERE EDITH EAB GEC  DE"] },
      { from: 15, to: 30, lines: ["Mme GRELIER ANNIE EAB GEC  DE attest o"] },
      { from: 30, to: 60, lines: ["Mme DUPUY ANNE MARIE", "EAB GKC  DE écho hépatique/a jeun strict"] },
      { from: 60, to: 90, lines: ["Mme COUSIN ESTELLE", "EMAM GEC  attest ok  laurent"] },
      { from: 90, to: 105, lines: ["Mme GOUET PRUNE EMAM GBM  ATTEST O"] },
      { from: 105, to: 120, lines: ["Mme CAMMAN ROBERTE EAB MG  DE"] },
      { from: 120, to: 150, lines: ["Mme BERNIER  SABRINA", "EMAM GCP  DE contrôle prothèses"], kind: "flagged" },
      { from: 330, to: 360, lines: ["Bébé GONSALVES NOLAN", "EHABB GEC  DE attest ok"], spaced: true },
      { from: 360, to: 390, lines: ["Mme GOBINAU JOSIANE", "EPM GKC  DE paroi sous axilaire gauche/gro"] },
      { from: 390, to: 420, lines: ["Mme TAIBI KARIMA", "EMAM GLS"], kind: "waiting" },
      { from: 420, to: 450, lines: ["Mme FAYDI MALIKA", "EMAM GKC  douleur/attest ok+dh ok SAGA"] },
      { from: 450, to: 480, lines: ["Mme THOMAS SONIA", "EMAM | EPEL GKC  Susp kyste+polype/vess"], kind: "open" },
      { from: 480, to: 495, lines: ["Mme SANCHEZ CHARLOTTE EMAM GPL  att"] },
      { from: 495, to: 510, lines: ["Mme ESTEVES ANA DE JESUS EVU GVR  v"], kind: "absent" },
      { from: 510, to: 540, lines: ["Mme REINHARDH PAMELA", "EMAM GVR  + glande creux axilliare, patient"] },
      { from: 540, to: 570, lines: ["Mme MONDON MARIE PAULE", "EMAM GVR  DE suivi cancer sein D , attest"] },
    ],
  },
  { name: "URGENCES", open: [], visits: [] },
];

const quarters = Array.from({ length: STEPS / 3 }, (_, q) => q);
const slotFill = (q: number, open: number[]) => (q >= 12 && q < 20 ? "#b66cff" : open.includes(q) ? "#ffffff" : "#ffff80");

const R = "#d01818";
const O = "#e08a1e";
const G = "#107010";
const K = "#000000";
const month: [number, string][][] = [
  [[0, K], [0, K], [0, K], [0, K], [0, K], [0, K], [1, R]],
  [[2, R], [3, R], [4, R], [5, R], [6, R], [7, R], [8, R]],
  [[9, R], [10, R], [11, O], [12, O], [13, O], [14, R], [15, R]],
  [[16, G], [17, G], [18, O], [19, G], [20, G], [21, R], [22, R]],
  [[23, O], [24, G], [25, O], [26, G], [27, G], [28, R], [29, R]],
  [[30, K], [31, K], [0, K], [0, K], [0, K], [0, K], [0, K]],
];

const tools = [
  { icon: <FolderIcon />, label: "Ajouter ( F2 )" },
  { icon: <SheetIcon />, label: "Affichage" },
  { icon: <LensIcon />, label: "Planning Hebdo. ( F7 )", more: true },
  { icon: <ResearchIcon />, label: "Rechercher ( F8 )" },
  { icon: <PrinterIcon />, label: "Impression ( F9 )" },
  { icon: <PrinterIcon />, label: "Impr écran ( F11 )" },
  { icon: <ExitIcon />, label: "Quitter" },
];

const doctors = [
  { count: 1, name: "DE" },
  { count: 1, name: "DE" },
  { count: 0, name: "" },
];
const operators = [
  { count: 0, name: "" },
  { count: 1, name: "CATH" },
  { count: 0, name: "" },
];

/* ---------- Parts ---------- */

function WindowCaption({ dim }: { dim?: boolean }) {
  return (
    <Caption>
      <CaptionButton $dim={dim} aria-label="Réduire"><MinIcon /></CaptionButton>
      <CaptionButton $dim={dim} aria-label="Agrandir"><MaxIcon /></CaptionButton>
      <CaptionButton $dim={dim} $close aria-label="Fermer"><CrossIcon dim={dim} /></CaptionButton>
    </Caption>
  );
}

function BrowserWindow() {
  return (
    <Browser>
      <BrowserTop>
        <TabList>
          {browserTabs.map((t) => (
            <TabItem key={t.label} $active={t.active}>
              {t.icon}
              <TabLabel>{t.label}</TabLabel>
              <CloseTabIcon />
            </TabItem>
          ))}
          <NewTab aria-label="Nouvel onglet" />
        </TabList>
        <WindowCaption />
      </BrowserTop>
      <BrowserBar>
        <BarButton aria-label="Précédent"><ArrowIcon /></BarButton>
        <BarButton aria-label="Suivant"><ArrowIcon flip /></BarButton>
        <BarButton aria-label="Actualiser"><ReloadIcon /></BarButton>
        <Omnibox>
          <GlobeIcon />
          <Url><UrlHost>localhost</UrlHost>:37128/Default.aspx</Url>
          <StarIcon />
        </Omnibox>
        <BarButton aria-label="Outils"><WrenchIcon /></BarButton>
      </BrowserBar>
      <Viewport>
        <Scheduler>
          <SchedulerBar>
            <StepButton aria-label="Jour précédent"><Triangle dir="left" size={12} /></StepButton>
            <StepButton aria-label="Jour suivant"><Triangle dir="right" size={12} /></StepButton>
            <TodayLink href="#today">today</TodayLink>
            <Triangle dir="down" size={10} />
            <DayTitle>mardi 3 janvier 2012</DayTitle>
            <ViewTabs>
              <ViewTab $active>Day</ViewTab>
              <ViewTab>Week</ViewTab>
              <ViewTab>Month</ViewTab>
              <ViewTab>Timeline</ViewTab>
            </ViewTabs>
          </SchedulerBar>
          <SchedulerHeads>
            {dayColumns.map((c) => <SchedulerHead key={c.name}>{c.name}</SchedulerHead>)}
          </SchedulerHeads>
          <SchedulerBody>
            <TimeColumn>
              {hoursLeft.map((h) => <TimeLabel key={h}>{h}</TimeLabel>)}
            </TimeColumn>
            {dayColumns.map((c) => (
              <DayColumn key={c.name}>
                {Array.from({ length: 36 }, (_, i) => <Line key={i} $row={i + 1} />)}
                {c.items.map(([start, span, name]) => (
                  <Appointment key={name} $start={start} $span={span}>
                    {name}
                    <Grip />
                  </Appointment>
                ))}
              </DayColumn>
            ))}
          </SchedulerBody>
        </Scheduler>
        <Scrollbar>
          <ScrollArrow aria-label="Monter"><Triangle dir="up" /></ScrollArrow>
          <ScrollTrack>
            <ScrollThumb><ThumbGrip /></ScrollThumb>
          </ScrollTrack>
          <ScrollArrow aria-label="Descendre"><Triangle dir="down" /></ScrollArrow>
        </Scrollbar>
      </Viewport>
    </Browser>
  );
}

function Staff({ role, people, step }: { role: string; people: { count: number; name: string }[]; step: number }) {
  return (
    <StaffList $step={step}>
      {people.map((p, i) => (
        <StaffItem key={i}>
          <span>Vac {i + 1} :</span>
          <span>{p.count}</span>
          <span>{role}</span>
          {p.name && <StaffName>{p.name}</StaffName>}
        </StaffItem>
      ))}
    </StaffList>
  );
}

function SidePanel() {
  return (
    <Side>
      <SelectBox $large>
        <Select $large aria-label="Secteur">
          <option>{"3|\u00a0\u00a0\u00a0\u00a0SENO VIGEAN"}</option>
        </Select>
        <SelectArrow><Triangle dir="down" /></SelectArrow>
      </SelectBox>
      <Calendar>
        <CalendarHead>
          <button aria-label="Mois précédent">&lt;&lt;</button>
          <strong>janvier 2012</strong>
          <button aria-label="Mois suivant">&gt;&gt;</button>
        </CalendarHead>
        <MonthTable>
          <thead>
            <tr>{["L", "M", "M", "J", "V", "S", "D"].map((d, i) => <th key={i}>{d}</th>)}</tr>
          </thead>
          <tbody>
            {month.map((week, i) => (
              <tr key={i}>
                {week.map(([day, ink], j) => <DayCell key={j} $ink={ink} $current={day === 3}>{day || ""}</DayCell>)}
              </tr>
            ))}
          </tbody>
        </MonthTable>
        <MonthFoot />
      </Calendar>
      <DayButtons>
        <PushButton>Aujourd'hui</PushButton>
        <PushButton>Demain</PushButton>
      </DayButtons>
      <Periods>
        {["Vac.1 (Matin)", "Vac.2 (A.Midi)", "Vac.3 (Soir)", "Journée"].map((p) => (
          <Choice key={p}>
            <Radio type="radio" name="period" defaultChecked={p === "Journée"} />
            {p}
          </Choice>
        ))}
      </Periods>
      <Guards><Check type="checkbox" />Gardes</Guards>
      <Staff role="Médecin" people={doctors} step={26} />
      <StaffGap />
      <Staff role="Manipulateur" people={operators} step={30} />
      <StaffGap />
      <SelectBox>
        <Select aria-label="Salle"><option>Salle</option></Select>
        <SelectArrow><Triangle dir="down" /></SelectArrow>
      </SelectBox>
      <Note aria-label="Remarques" defaultValue={"laisser mme brevadis\nsur 30 mn ng"} />
    </Side>
  );
}

function AgendaWindow() {
  const rate = 80;
  return (
    <Agenda>
      <AgendaTitle>
        <AgendaName><AgendaIcon />Gestion Des Rendez Vous</AgendaName>
        <WindowCaption dim />
      </AgendaTitle>
      <Client>
        <AgendaMenu>
          <MenuItem>Configuration</MenuItem>
          <MenuItem>A Propos</MenuItem>
        </AgendaMenu>
        <ToolRow>
          {tools.map((t) => (
            <React.Fragment key={t.label}>
              <Tool>{t.icon}{t.label}</Tool>
              {t.more && <ToolArrow aria-label="Autres plannings"><Triangle dir="down" /></ToolArrow>}
            </React.Fragment>
          ))}
        </ToolRow>
        <Workspace>
          <SiteTabs>
            <SiteTab>Salle</SiteTab>
            <SiteTab>Laboratoire</SiteTab>
            <SiteTab>Menu des sites</SiteTab>
          </SiteTabs>
          <Planner>
            <DutyLine>{"DE  09:00 à 11:30 ECHO 14:00 à 18:30 ECHO"}</DutyLine>
            <InfoLine>
              <DateLabel>Mardi 03 Janvier 2012 Semaine Impaire (1)</DateLabel>
              <InfoBox />
              <SectorLabel>3 - SENO VIGEAN</SectorLabel>
              <RateLabel>aux d'occupation :</RateLabel>
              <Gauge role="progressbar" aria-valuenow={rate}>
                <GaugeFill style={{ width: `${rate + 2}%` }} />
                <GaugeText>{rate}%</GaugeText>
              </Gauge>
            </InfoLine>
            <PlannerHeads>
              {rooms.map((r) => <PlannerHead key={r.name}>{r.name}</PlannerHead>)}
            </PlannerHeads>
            <PlannerBody>
              <Ruler>
                {Array.from({ length: 10 }, (_, h) => (
                  <HourMark key={h} $hour={h}>{String(h + 9).padStart(2, "0")}</HourMark>
                ))}
                {quarters.map((q) => (
                  <QuarterMark key={q} $quarter={q}>{["00", "15", "30", "45"][q % 4]}</QuarterMark>
                ))}
              </Ruler>
              {rooms.map((r) => (
                <Room key={r.name}>
                  {quarters.map((q) => <Slot key={q} $quarter={q} $fill={slotFill(q, r.open)} />)}
                  {r.visits.map((v) => {
                    const look = looks[v.kind ?? "booked"];
                    return (
                      <Visit key={v.from} $from={v.from} $to={v.to} $fill={look.fill} $bar={look.bar} $ink={look.ink} $spaced={!!v.spaced}>
                        {v.lines.map((l) => <span key={l}>{l}</span>)}
                      </Visit>
                    );
                  })}
                </Room>
              ))}
            </PlannerBody>
          </Planner>
          <SidePanel />
        </Workspace>
      </Client>
    </Agenda>
  );
}

export default function App() {
  return (
    <>
      <GlobalStyle />
      <Desktop>
        <Studio>
          <StudioTitle>
            <StudioIcon />
            <StudioTitleText>RadSchedulerTest6 (Exécution) - Microsoft Visual Studio (Administrateur)</StudioTitleText>
          </StudioTitle>
          <StudioMenu>
            {studioMenu.map((m) => <MenuItem key={m}>{m}</MenuItem>)}
          </StudioMenu>
          <BrowserWindow />
        </Studio>
        <AgendaWindow />
      </Desktop>
    </>
  );
}
